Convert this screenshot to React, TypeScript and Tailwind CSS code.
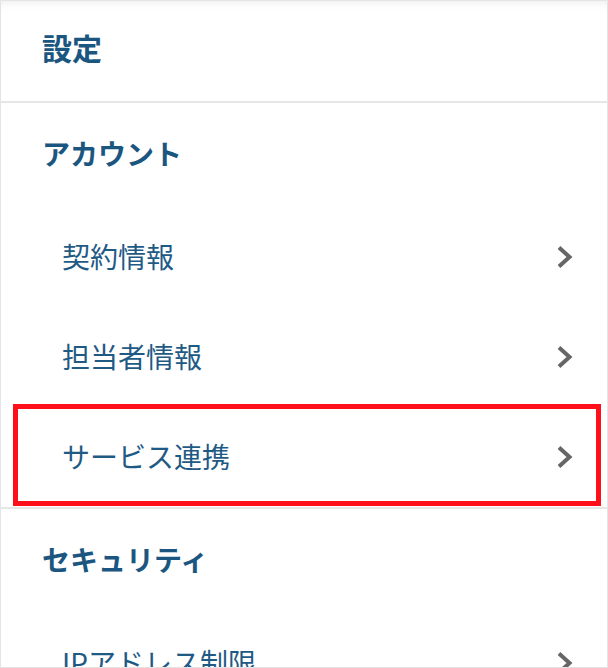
import React from 'react';

const font = { fontFamily: '"Noto Sans CJK JP", "Noto Sans", sans-serif' };

type Group = { title: string; items: string[] };

const groups: Group[] = [
  { title: 'アカウント', items: ['契約情報', '担当者情報', 'サービス連携'] },
  { title: 'セキュリティ', items: ['IPアドレス制限'] },
];

function Chevron() {
  return (
    <svg width="18" height="24" viewBox="0 0 18 24" className="shrink-0">
      <path d="M3 2.5 L13.5 12 L3 21.5" fill="none" stroke="#666666" strokeWidth="4" strokeLinecap="butt" strokeLinejoin="miter" />
    </svg>
  );
}

export default function App() {
  return (
    <div
      className="relative w-[608px] h-[668px] overflow-hidden bg-white border border-[#e4e4e4]"
      style={font}
    >
      {/* Header */}
      <div className="h-[102px] flex items-center pl-[41px] pb-[8px] border-b-2 border-[#e6e6e6] shadow-[inset_0_8px_8px_-6px_rgba(0,0,0,0.07)]">
        <span className="text-[30px] font-bold text-[#1b5680] leading-none">設定</span>
      </div>

      {groups.map((g) => (
        <div key={g.title} className="border-b-2 border-[#e6e6e6]">
          <div className="h-[104px] flex items-center pl-[41px] pb-[4px]">
            <span className="text-[28px] font-bold text-[#1b5680] leading-none">{g.title}</span>
          </div>
          {g.items.map((item) => (
            <div key={item} className="h-[100px] flex items-center justify-between pl-[61px] pr-[33px]">
              <span className="text-[28px] text-[#1f5a85] leading-none pb-[2px]">{item}</span>
              <Chevron />
            </div>
          ))}
        </div>
      ))}

      {/* highlight annotation */}
      <div className="absolute left-[12px] top-[403px] w-[588px] h-[102px] border-[5px] border-[#ff0f1a] pointer-events-none" />
    </div>
  );
}
